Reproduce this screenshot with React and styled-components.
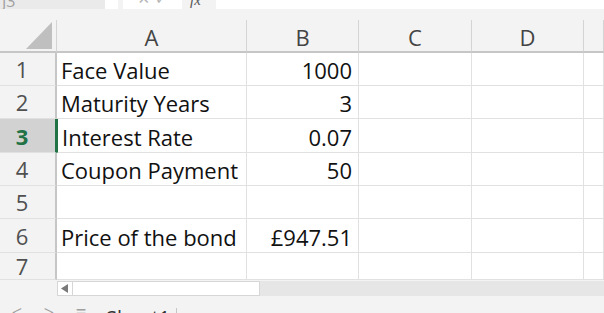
import React from 'react'
import styled, { createGlobalStyle } from 'styled-components'

const GlobalStyle = createGlobalStyle`
  html, body {
    margin: 0;
    padding: 0;
    background: #f3f3f3;
  }
  * { box-sizing: border-box; }
`

const columns = ['A', 'B', 'C', 'D', '']
const rows = [
  ['Face Value', '1000'],
  ['Maturity Years', '3'],
  ['Interest Rate', '0.07'],
  ['Coupon Payment', '50'],
  ['', ''],
  ['Price of the bond', '£947.51'],
  ['', '']
]
const selectedRow = 3

export default function App() {
  return (
    <Page>
      <GlobalStyle />
      <FormulaBar>
        <NameBox>J3</NameBox>
        <Gap />
        <IconBox>
          <Glyph>✕</Glyph>
          <Glyph>✓</Glyph>
        </IconBox>
        <Fx>fx</Fx>
        <FormulaInput />
      </FormulaBar>
      <Sheet>
        <Corner>
          <svg width="26" height="27" viewBox="0 0 26 27">
            <polygon points="26,0 26,27 0,27" fill="#bfbfbf" />
          </svg>
        </Corner>
        {columns.map((c, i) => (
          <ColHeader key={i}>{c}</ColHeader>
        ))}
        {rows.map((r, i) => (
          <React.Fragment key={i}>
            <RowHeader $selected={i + 1 === selectedRow}>
              <RowNum>{i + 1}</RowNum>
            </RowHeader>
            <Cell $selected={i + 1 === selectedRow}>{r[0]}</Cell>
            <Cell $num>{r[1]}</Cell>
            <Cell />
            <Cell />
            <Cell />
          </React.Fragment>
        ))}
      </Sheet>
      <ScrollRow>
        <ArrowBox>
          <svg width="8" height="9" viewBox="0 0 8 9">
            <polygon points="7,0 7,9 0,4.5" fill="#7a7a7a" />
          </svg>
        </ArrowBox>
        <Thumb />
        <Track />
      </ScrollRow>
      <TabBar>
        <TabIcon>&lt;</TabIcon>
        <TabIcon>&gt;</TabIcon>
        <TabIcon>≡</TabIcon>
        <SheetTab>Sheet1</SheetTab>
        <TabDivider />
      </TabBar>
    </Page>
  )
}

const Page = styled.div`
  width: 604px;
  height: 313px;
  overflow: hidden;
  background: #f3f3f3;
  display: flex;
  flex-direction: column;
  font-family: "Open Sans", "Liberation Sans", sans-serif;
`

const FormulaBar = styled.div`
  height: 9px;
  display: flex;
  overflow: hidden;
  margin-bottom: 11px;
`

const NameBox = styled.div`
  width: 105px;
  background: #eaeaea;
  color: #a0a0a0;
  font-size: 16px;
  line-height: 16px;
  margin-top: -7px;
  height: 16px;
  padding-left: 2px;
`

const Gap = styled.div`
  width: 13px;
  background: #ffffff;
  margin-right: 5px;
`

const IconBox = styled.div`
  width: 59px;
  background: #ffffff;
  display: flex;
  justify-content: space-around;
  padding: 0 12px;
  overflow: hidden;
`

const Glyph = styled.span`
  color: #b5b5b5;
  font-size: 15px;
  line-height: 15px;
  margin-top: -8px;
  font-family: "DejaVu Sans", sans-serif;
`

const Fx = styled.div`
  width: 34px;
  padding-left: 8px;
  font-family: "Liberation Serif", serif;
  font-style: italic;
  font-size: 15px;
  line-height: 15px;
  margin-top: -7px;
  color: #555;
`

const FormulaInput = styled.div`
  flex: 1;
  background: #ffffff;
`

const Sheet = styled.div`
  display: grid;
  grid-template-columns: 57px 190px 112px 113px 112px 20px;
  grid-template-rows: 33px repeat(6, 33.34px) 27px;
  background: #ffffff;
  font-size: 22px;
`

const Corner = styled.div`
  background: #f3f3f3;
  border-right: 1px solid #d4d4d4;
  border-bottom: 2px solid #c6c6c6;
  display: flex;
  justify-content: flex-end;
  align-items: flex-end;
  padding: 0 4px 2px 0;
`

const ColHeader = styled.div`
  background: #f3f3f3;
  border-right: 1px solid #d4d4d4;
  border-bottom: 2px solid #c6c6c6;
  color: #444;
  display: flex;
  align-items: center;
  justify-content: center;
  padding-top: 4px;
`

const RowHeader = styled.div`
  background: ${p => (p.$selected ? '#d2d2d2' : '#f3f3f3')};
  color: ${p => (p.$selected ? '#217346' : '#505050')};
  font-weight: ${p => (p.$selected ? 700 : 400)};
  border-right: 2px solid ${p => (p.$selected ? '#217346' : '#c6c6c6')};
  border-bottom: 1px solid #e1e1e1;
  display: flex;
  align-items: center;
`

const RowNum = styled.span`
  width: 44px;
  text-align: center;
`

const Cell = styled.div`
  border-right: 1px solid #e1e1e1;
  border-bottom: 1px solid #e1e1e1;
  color: #111;
  display: flex;
  align-items: center;
  justify-content: ${p => (p.$num ? 'flex-end' : 'flex-start')};
  padding: 2px 6px 0 4px;
  white-space: nowrap;
  overflow: hidden;
  border-left: ${p => (p.$selected ? '1px solid #217346' : 'none')};
`

const ScrollRow = styled.div`
  height: 16px;
  display: flex;
  padding-left: 57px;
  margin-top: 1px;
`

const ArrowBox = styled.div`
  width: 16px;
  background: #ffffff;
  border: 1px solid #d6d6d6;
  display: flex;
  align-items: center;
  justify-content: center;
`

const Thumb = styled.div`
  width: 187px;
  background: #ffffff;
  border: 1px solid #d6d6d6;
  border-left: none;
`

const Track = styled.div`
  flex: 1;
  background: #e6e6e6;
`

const TabBar = styled.div`
  height: 17px;
  display: flex;
  align-items: flex-start;
  padding-top: 12px;
  overflow: hidden;
  color: #a0a0a0;
`

const TabIcon = styled.span`
  font-size: 18px;
  line-height: 18px;
  width: 30px;
  margin-top: -5px;
  text-align: center;
  margin-left: 2px;
`

const SheetTab = styled.span`
  font-size: 20px;
  line-height: 20px;
  color: #333;
  margin-left: 10px;
  width: 70px;
`

const TabDivider = styled.div`
  width: 1px;
  height: 20px;
  background: #c6c6c6;
`
